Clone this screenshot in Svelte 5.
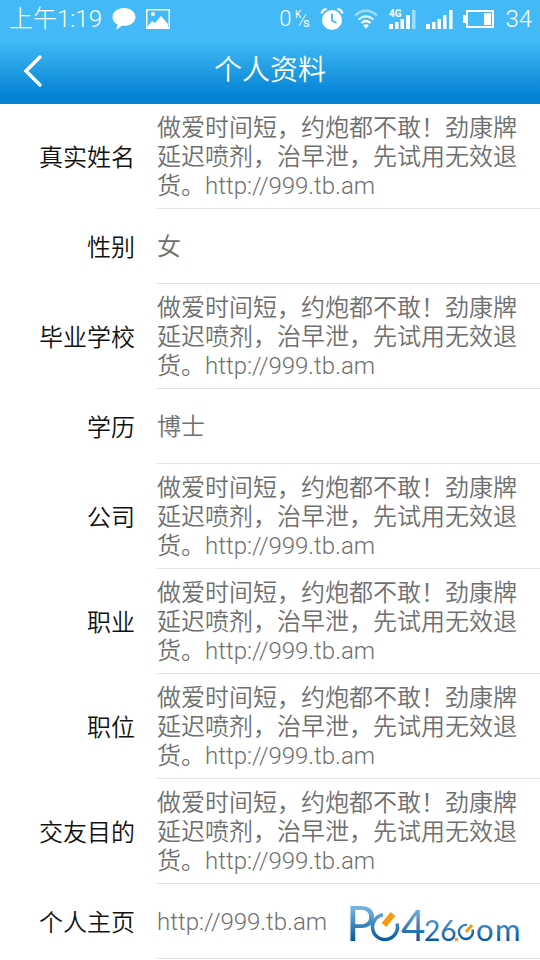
<script>
  const promo = '做爱时间短，约炮都不敢！劲康牌延迟喷剂，治早泄，先试用无效退货。http://999.tb.am';

  const fields = [
    { label: '真实姓名', value: promo },
    { label: '性别', value: '女' },
    { label: '毕业学校', value: promo },
    { label: '学历', value: '博士' },
    { label: '公司', value: promo },
    { label: '职业', value: promo },
    { label: '职位', value: promo },
    { label: '交友目的', value: promo },
    { label: '个人主页', value: 'http://999.tb.am' }
  ];
</script>

<svelte:head>
  <title>个人资料</title>
</svelte:head>

<div class="page">
  <div class="top">
    <div class="status-bar">
      <div class="status-left">
        <span class="clock">上午1:19</span>
        <svg width="24" height="24" viewBox="0 0 24 24" fill="#fff" aria-hidden="true">
          <path d="M12 1C5.6 1 .5 5 .5 10c0 3.400 2 6.100 5 7.600L4.300 23l5.600-4.200c8 .6 13.600-3.300 13.600-8.800C23.500 5 18.400 1 12 1z" />
        </svg>
        <svg class="photo" width="24" height="20" viewBox="0 0 24 20" aria-hidden="true">
          <path fill="#fff" fill-rule="evenodd" d="M0 0h24v20H0zM1.500 1.500v17h21v-17z" />
          <path fill="#fff" d="M2 17l4-5 3 2 6-7 7 8v4H2z" />
          <circle cx="7" cy="5" r="2" fill="#fff" />
        </svg>
      </div>

      <div class="status-right">
        <span class="speed">0</span>
        <svg class="unit" width="16" height="20" viewBox="0 0 16 20" fill="#fff" aria-hidden="true">
          <text x="0" y="9" font-size="10">K</text>
          <path d="M4 17L11 5" stroke="#fff" />
          <text x="8" y="18" font-size="13">s</text>
        </svg>
        <svg class="alarm" width="24" height="24" viewBox="0 0 24 24" fill="none" stroke="#fff" aria-hidden="true">
          <circle cx="12" cy="13" r="10" fill="#fff" stroke="none" />
          <path d="M1.500 6.500Q2.500 2.500 6.500 1.800M17.500 1.800Q21.500 2.500 22.500 6.500" stroke-width="2.200" />
          <path d="M12 6.500v7l4.500 2.500" stroke="#42b9f5" stroke-width="1.800" />
        </svg>
        <svg class="wifi" width="24" height="20" viewBox="0 0 24 20" fill="none" stroke="#fff" stroke-width="2.200" aria-hidden="true">
          <path d="M1 6.500Q12-3 23 6.500" opacity=".5" />
          <path d="M4.500 10.500Q12 4 19.500 10.500" opacity=".8" />
          <path d="M7.500 14Q12 10 16.500 14" />
          <path d="M9 16.500Q12 14 15 16.500L12 19.500z" fill="#fff" stroke="none" />
        </svg>
        <svg class="mobile" width="27" height="22" viewBox="0 0 27 22" fill="#fff" aria-hidden="true">
          <text x="0" y="9" font-size="10" font-weight="700">4G</text>
          <path d="M0 16h4v5H0zM6 14h3.500v7H6zM11.500 11h3.500v10h-3.500zM17 7h4v14h-4z" />
          <path d="M23 2h3.500v19H23z" opacity=".5" />
        </svg>
        <svg class="signal" width="27" height="22" viewBox="0 0 27 22" fill="#fff" aria-hidden="true">
          <path d="M0 16h4v5H0zM6 14h3.500v7H6zM11.500 11h3.500v10h-3.500zM17 7h3.500v14H17zM23 2h3.500v19H23z" />
        </svg>
        <svg class="battery" width="32" height="20" viewBox="0 0 32 20" aria-hidden="true">
          <path fill="none" stroke="#fff" stroke-width="2" d="M4 2h26v16H4V2z" />
          <path fill="#fff" d="M0 6h4v8H0zM21 4h7v12h-7z" />
        </svg>
        <span class="percent">34</span>
      </div>
    </div>

    <header>
      <button class="back" aria-label="返回">
        <svg width="20" height="34" viewBox="0 0 20 34" fill="none" stroke="#fff" stroke-width="3.500" aria-hidden="true">
          <path d="M17 3L3 17l14 14" stroke-linecap="round" />
        </svg>
      </button>
      <h1>个人资料</h1>
    </header>
  </div>

  <dl>
    {#each fields as { label, value }}
      <div class="row" class:tall={value === promo}>
        <dt>{label}</dt>
        <dd>{value}</dd>
      </div>
    {/each}
  </dl>

  <svg class="watermark" width="184" height="74" viewBox="0 0 184 74" role="img" aria-label="PC426.com">
    <defs>
      <linearGradient id="ink" gradientUnits="userSpaceOnUse" x1="0" y1="20" x2="0" y2="56">
        <stop offset="0" stop-color="#7dbbe6" />
        <stop offset="1" stop-color="#0758a0" />
      </linearGradient>
    </defs>
    <g fill="url(#ink)">
      <text x="1" y="56" font-size="49">P</text>
      <text x="56" y="56" font-size="42">4</text>
      <text x="79" y="56" font-size="28">26</text>
      <text x="131" y="56" font-size="31">o</text>
      <text x="150" y="56" font-size="31">m</text>
    </g>
    <g fill="none" stroke="url(#ink)">
      <path d="M38 29.700A12.500 12.500 0 1 0 52 38.500" stroke-width="3.500" />
      <path d="M122 40A7 7 0 1 0 127.500 44.500" stroke-width="2.400" />
    </g>
    <g stroke="#f39a12">
      <path d="M39 40L48 29" stroke-width="6" />
      <path d="M121 47L127 40" stroke-width="3" />
    </g>
    <path d="M110 53h3v3h-3z" fill="#f39a12" />
  </svg>
</div>

<style>
  :global(body) {
    margin: 0;
    background: #fff;
  }

  .page {
    position: relative;
    overflow: hidden;
    font-family: Roboto, "Noto Sans CJK SC", sans-serif;
    font-weight: 350;
  }

  .top {
    background: linear-gradient(#43b9f7 0, #43bbf7 38%, #0583d4 92%, #0583d4 100%);
    color: #fff;
  }

  .status-bar {
    display: flex;
    justify-content: space-between;
    align-items: center;
    height: 38px;
    padding: 0 8px 0 9px;
    font-size: 24px;
    line-height: 36px;
    font-weight: 300;
  }

  .status-left,
  .status-right {
    display: flex;
    align-items: center;
  }

  .status-left {
    gap: 10px;
  }

  .speed {
    font-size: 22px;
  }

  .unit {
    margin: 0 9px 0 4px;
    font-weight: 400;
  }

  .alarm {
    margin-right: 10px;
  }

  .wifi {
    margin-right: 11px;
  }

  .mobile,
  .signal,
  .battery {
    margin-right: 10px;
  }

  header {
    display: grid;
    grid-template-columns: 66px 1fr 66px;
    align-items: center;
    height: 66px;
  }

  .back {
    display: flex;
    align-items: center;
    height: 66px;
    padding: 0 0 0 23px;
    border: 0;
    background: none;
    cursor: pointer;
  }

  h1 {
    margin: 0;
    font-size: 28px;
    font-weight: 350;
    line-height: 38px;
    text-align: center;
  }

  dl {
    margin: 0;
  }

  .row {
    display: grid;
    grid-template-columns: 135px 1fr;
    column-gap: 22px;
    min-height: 75px;
    font-size: 24px;
    line-height: 29px;
  }

  .row.tall {
    min-height: 105px;
  }

  dt {
    align-self: center;
    padding-top: 3px;
    color: #111;
    text-align: right;
  }

  dd {
    display: flex;
    align-items: center;
    margin: 0;
    padding: 3px 16px 0 0;
    border-bottom: 1px solid #e3e3e3;
    color: #6f6f6f;
  }

  .watermark {
    position: absolute;
    right: 11px;
    bottom: 0;
    font-family: Lato, sans-serif;
    font-weight: 400;
  }
</style>
